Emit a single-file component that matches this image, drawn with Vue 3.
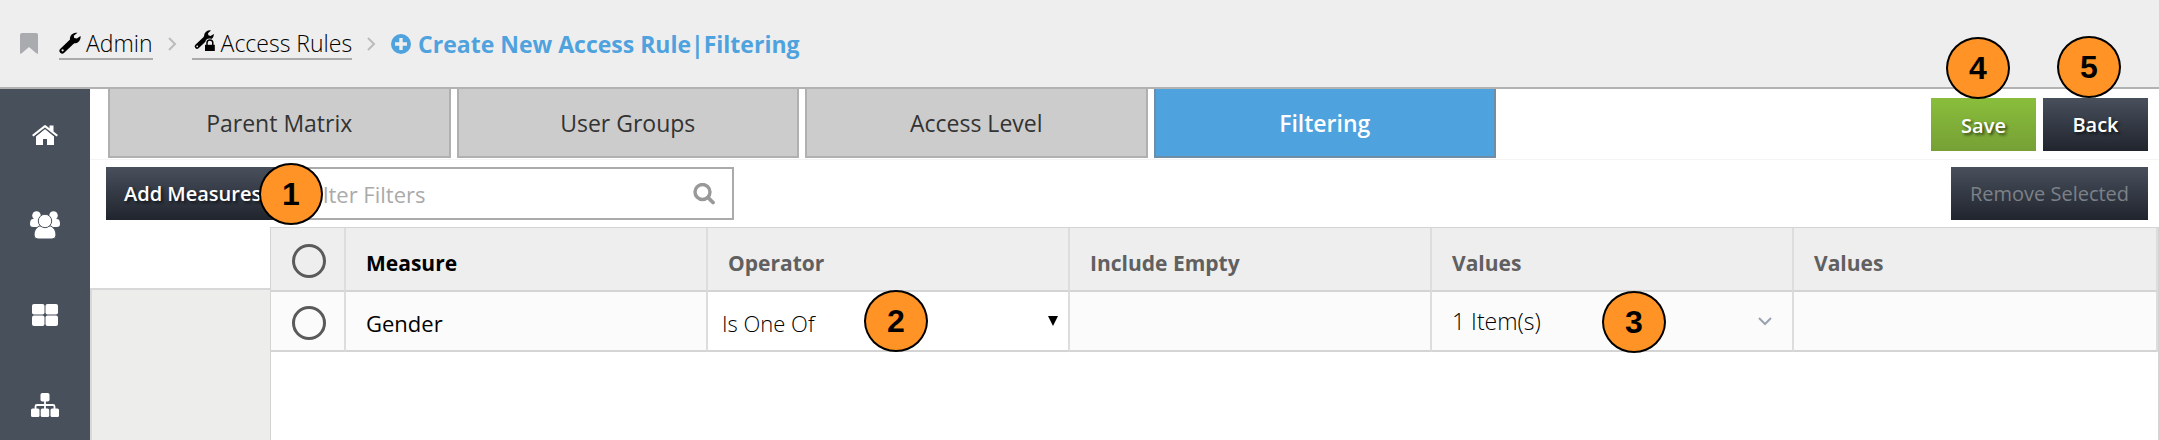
<script setup>
import { ref } from 'vue'

const tabs = ['Parent Matrix', 'User Groups', 'Access Level', 'Filtering']
const activeTab = ref('Filtering')
const headers = ['Measure', 'Operator', 'Include Empty', 'Values', 'Values']
const filterText = ref('')
const operator = ref('Is One Of')
</script>

<template>
  <div class="page">
    <header class="topbar">
      <button class="bookmark" type="button" aria-label="Bookmark">
        <svg width="18" height="21" viewBox="0 0 18 21"><path d="M2 0h14q2 0 2 2v19l-2-1-7-6-7 6-2 1V2q0-2 2-2z" fill="#a9abae" /></svg>
      </button>
      <nav class="crumbs" aria-label="Breadcrumb">
        <a class="crumb" href="#admin">
          <svg width="22" height="22" viewBox="0 0 22 22">
            <path d="M3.300 18.700 13.500 9" stroke="#000" stroke-width="5.600" stroke-linecap="round" />
            <path d="M18.500.8a6.200 6.200 0 0 0-7.400 7.600l2.700 2.700A6.200 6.200 0 0 0 21.500 4l-3.700 2.600-2.600-.6-.4-2.300z" />
            <circle cx="3.600" cy="18.300" r="1.100" fill="#eee" />
          </svg>
          <span>Admin</span>
        </a>
        <svg class="sep" width="9" height="14" viewBox="0 0 9 14"><path d="M1 1l6 6-6 6" /></svg>
        <a class="crumb" href="#rules">
          <svg class="lockicon" width="24" height="22" viewBox="0 0 24 22">
            <path d="M5 16.500 14 8" stroke="#000" stroke-width="4.600" stroke-linecap="round" />
            <path d="M19 .6a5.400 5.400 0 0 0-6.700 6.600l2.500 2.500A5.400 5.400 0 0 0 21.800 4l-3.300 1.900-2.100-.6-.4-2z" />
            <circle cx="5.200" cy="16.300" r=".9" fill="#eee" />
            <path d="M12 22v-8.500h1.500V12q0-3.500 4-3.500t4 3.500v1.500H24V22z" fill="#eee" />
            <path d="M13 14.800h9.800V21H13z" />
            <path d="M15 15v-2.200q0-2.800 2.900-2.800t2.900 2.800V15" fill="none" stroke="#000" stroke-width="1.500" />
          </svg>
          <span>Access Rules</span>
        </a>
        <svg class="sep" width="9" height="14" viewBox="0 0 9 14"><path d="M1 1l6 6-6 6" /></svg>
        <span class="current" aria-current="page">
          <svg width="20" height="20" viewBox="0 0 20 20"><circle cx="10" cy="10" r="10" fill="#4ea2de" /><path d="M10 4v12M4 10h12" stroke="#eee" stroke-width="3.400" /></svg>
          <span>Create New Access Rule|Filtering</span>
        </span>
      </nav>
    </header>

    <div class="body">
      <nav class="sidebar" aria-label="Main">
        <a href="#home" aria-label="Home">
          <svg width="26" height="20" viewBox="0 0 26 20"><path d="M4 11.500 13 4l9 7.500V20h-7v-6h-4v6H4z" /><path d="M0 10 12 .4q1-.8 2 0L17.500 3.200V.5h4v6L26 10l-1.500 1.600L13 2.600 1.500 11.600z" /><path d="M2.500 11.800 13 3.400l10.500 8.400" fill="none" stroke="#48505c" stroke-width=".8" /></svg>
        </a>
        <a href="#users" aria-label="Users">
          <svg width="30" height="28" viewBox="0 0 30 28">
            <circle cx="6.500" cy="4.500" r="4.300" /><circle cx="23.500" cy="4.500" r="4.300" />
            <path d="M3 8h7v8H3q-3 0-3-3 0-5 3-5zM27 8h-7v8h7q3 0 3-3 0-5-3-5z" />
            <path d="M9 15h12q5 3 5 9 0 4-4 4H8q-4 0-4-4 0-6 5-9z" stroke="#48505c" stroke-width="1" />
            <circle cx="15" cy="10" r="6.700" stroke="#48505c" stroke-width="1" />
          </svg>
        </a>
        <a href="#dashboards" aria-label="Dashboards">
          <svg width="26" height="22" viewBox="0 0 26 22"><rect width="12.500" height="10.500" rx="2" /><rect x="13.500" width="12.500" height="10.500" rx="2" /><rect y="11.500" width="12.500" height="10.500" rx="2" /><rect x="13.500" y="11.500" width="12.500" height="10.500" rx="2" /></svg>
        </a>
        <a href="#hierarchy" aria-label="Hierarchy">
          <svg width="28" height="24" viewBox="0 0 28 24"><path d="M14 7v9M4.500 16v-2.500q0-1.500 1.500-1.500h16q1.500 0 1.500 1.500V16" fill="none" stroke="#fff" stroke-width="1.800" /><rect x="9.500" width="9" height="8.500" rx="1.800" /><rect y="15.500" width="8.500" height="8.500" rx="1.500" /><rect x="9.700" y="15.500" width="8.500" height="8.500" rx="1.500" /><rect x="19.500" y="15.500" width="8.500" height="8.500" rx="1.500" /></svg>
        </a>
      </nav>

      <main class="main">
        <div class="tabrow">
          <div class="tabs" role="tablist">
            <button
              v-for="t in tabs"
              :key="t"
              class="tab"
              :class="{ active: t === activeTab }"
              type="button"
              role="tab"
              :aria-selected="t === activeTab"
              @click="activeTab = t"
            >{{ t }}</button>
          </div>
          <div class="actions">
            <div class="anchor">
              <button class="btn save" type="button">Save</button>
              <span class="badge on-save">4</span>
            </div>
            <div class="anchor">
              <button class="btn back" type="button">Back</button>
              <span class="badge on-back">5</span>
            </div>
          </div>
        </div>

        <div class="toolbar">
          <div class="anchor">
            <button class="btn add" type="button">Add Measures</button>
            <span class="badge on-add">1</span>
          </div>
          <label class="search">
            <input v-model="filterText" type="text" placeholder="Filter Filters" aria-label="Filter Filters" />
            <svg width="22" height="22" viewBox="0 0 22 22"><circle cx="9.500" cy="9" r="7.500" fill="none" stroke="#999" stroke-width="3.400" /><path d="M15 14.500 20 19.500" stroke="#999" stroke-width="3.800" stroke-linecap="round" /></svg>
          </label>
          <button class="btn remove" type="button" disabled>Remove Selected</button>
        </div>

        <div class="content">
          <div class="gutter"></div>
          <div class="grid">
            <table>
              <colgroup>
                <col class="pick" />
                <col v-for="(h, i) in headers" :key="i" class="data" />
              </colgroup>
              <thead>
                <tr>
                  <th class="pick"><input type="checkbox" aria-label="Select all" /></th>
                  <th v-for="(h, i) in headers" :key="i" :class="{ sorted: i === 0 }">{{ h }}</th>
                </tr>
              </thead>
              <tbody>
                <tr>
                  <td class="pick"><input type="checkbox" aria-label="Select Gender" /></td>
                  <td class="name">Gender</td>
                  <td class="edit">
                    <div class="field">
                      <select v-model="operator" aria-label="Operator">
                        <option>Is One Of</option>
                        <option>Is Not One Of</option>
                      </select>
                      <svg class="arrow" width="10" height="10" viewBox="0 0 10 10"><path d="M0 0h10L5 10z" /></svg>
                      <span class="badge on-operator">2</span>
                    </div>
                  </td>
                  <td></td>
                  <td class="values">
                    <div class="field">
                      <button class="items" type="button">
                        <span>1 Item(s)</span>
                        <svg width="14" height="9" viewBox="0 0 14 9"><path d="M1 1l6 6 6-6" fill="none" stroke="#99a3b0" stroke-width="2" /></svg>
                      </button>
                      <span class="badge on-values">3</span>
                    </div>
                  </td>
                  <td></td>
                </tr>
              </tbody>
            </table>
          </div>
        </div>
      </main>
    </div>
  </div>
</template>

<style>
body {
  margin: 0;
  background: #fff;
}
</style>

<style scoped>
.page {
  display: flex;
  flex-direction: column;
  min-height: 100vh;
  font-family: "Open Sans", "Noto Sans", sans-serif;
  color: #000;
}
.page * {
  box-sizing: border-box;
}
button,
input,
select {
  font-family: inherit;
  margin: 0;
}
button {
  border: 0;
  padding: 0;
  background: none;
  cursor: pointer;
}
svg {
  display: block;
  flex: none;
}
.topbar {
  display: flex;
  align-items: center;
  height: 89px;
  padding: 0 20px;
  background: #eee;
  border-bottom: 2px solid #b2b2b2;
}
.crumbs {
  display: flex;
  align-items: center;
  margin-left: 21px;
  font-size: 23px;
  line-height: 30px;
  white-space: nowrap;
}
.crumb {
  display: flex;
  align-items: center;
  gap: 5px;
  color: #000;
  font-weight: 300;
  text-decoration: none;
  border-bottom: 2px solid #aaa;
}
.lockicon {
  margin-bottom: 4px;
}
.sep {
  margin: 0 15px;
  fill: none;
  stroke: #bbb;
  stroke-width: 2;
}
.current {
  display: flex;
  align-items: center;
  gap: 7px;
  color: #4ea2de;
  font-weight: 700;
}
.body {
  display: flex;
  flex: 1;
}
.sidebar {
  flex: none;
  display: flex;
  flex-direction: column;
  width: 90px;
  padding-top: 1px;
  background: #48505c;
}
.sidebar a {
  display: flex;
  align-items: center;
  justify-content: center;
  height: 90px;
  fill: #fff;
}
.main {
  display: flex;
  flex-direction: column;
  flex: 1;
  min-width: 0;
}
.tabrow {
  display: flex;
  justify-content: space-between;
  height: 71px;
  padding: 0 11px 0 18px;
  border-bottom: 1px solid #f4f4f4;
}
.tabs {
  display: flex;
  gap: 6px;
  flex: 0 1 1388px;
  height: 69px;
}
.tab {
  flex: 1;
  background: #ccc;
  border: 2px solid #b0b0b0;
  border-top: 0;
  color: #333;
  font-size: 23px;
  line-height: 30px;
  font-weight: 500;
}
.tab.active {
  background: #4ea2de;
  border-color: #6f8ea6;
  color: #fff;
  font-weight: 600;
}
.actions {
  display: flex;
  gap: 7px;
  padding-top: 9px;
}
.anchor {
  position: relative;
}
.btn {
  height: 53px;
  color: #fff;
  font-size: 20px;
  line-height: 28px;
  font-weight: 600;
  white-space: nowrap;
  background: linear-gradient(#48505c, #20242d);
  text-shadow: 2px 2px 3px rgba(0, 0, 0, 0.6);
}
.save,
.back {
  width: 105px;
}
.save {
  padding-top: 3px;
  background: linear-gradient(#89be3b, #76a035);
}
.add {
  width: 170px;
  padding-left: 18px;
  text-align: left;
}
.remove {
  width: 197px;
  margin-left: auto;
  color: #7c8188;
  font-weight: 500;
  text-shadow: none;
}
.toolbar {
  display: flex;
  padding: 7px 11px 7px 16px;
}
.search {
  display: flex;
  align-items: center;
  width: 458px;
  height: 53px;
  padding: 0 17px 0 28px;
  border: 2px solid #aaa;
  background: #fff;
}
.search input {
  flex: 1;
  min-width: 0;
  border: 0;
  outline: 0;
  padding: 0;
  font-size: 22px;
  line-height: 30px;
  background: none;
}
.search input::placeholder {
  color: #aaa;
  opacity: 1;
}
.content {
  display: flex;
  flex: 1;
}
.gutter {
  flex: none;
  width: 180px;
  margin-top: 61px;
  background: #ededeb;
  border-top: 2px solid #d8d8d8;
  border-left: 2px solid #d8d8d8;
}
.grid {
  flex: 1;
  min-width: 0;
  border: 1px solid #d4d4d4;
  border-bottom: 0;
}
table {
  width: 100%;
  table-layout: fixed;
  border-collapse: separate;
  border-spacing: 0;
}
col.pick {
  width: 75px;
}
col.data {
  width: 362px;
}
col.data:last-child {
  width: auto;
}
th,
td {
  padding: 0 20px;
  text-align: left;
  border-right: 2px solid #ddd;
  border-bottom: 2px solid #d4d4d4;
}
th {
  height: 64px;
  padding-top: 8px;
  background: #eee;
  color: #606060;
  font-size: 21px;
  line-height: 28px;
  font-weight: 700;
}
th.sorted {
  color: #000;
}
td {
  height: 60px;
  padding-top: 3px;
  background: #fbfbfb;
  font-size: 22px;
  line-height: 30px;
}
td.name {
  font-weight: 500;
}
th.pick,
td.pick {
  padding: 3px 0 0 2px;
}
.pick input {
  display: block;
  appearance: none;
  width: 34px;
  height: 34px;
  margin: 0 auto;
  border: 3px solid #5a5a5a;
  border-radius: 50%;
}
td.edit,
td.values {
  padding: 0;
}
td.edit {
  background: #fff;
}
.field {
  position: relative;
  display: flex;
  align-items: center;
  height: 58px;
}
select {
  appearance: none;
  width: 100%;
  height: 58px;
  padding: 3px 14px 0;
  border: 0;
  background: transparent;
  color: #000;
  font-size: 22px;
  font-weight: 300;
}
.arrow {
  position: absolute;
  right: 10px;
  pointer-events: none;
}
.items {
  display: flex;
  align-items: center;
  justify-content: space-between;
  width: 100%;
  height: 54px;
  padding: 0 20px;
  color: #000;
  font-size: 23px;
  font-weight: 300;
}
.badge {
  position: absolute;
  z-index: 2;
  display: flex;
  align-items: center;
  justify-content: center;
  width: 64px;
  height: 62px;
  border: 2px solid #000;
  border-radius: 50%;
  background: #ff9326;
  color: #000;
  font: 700 32px/36px "Liberation Sans", Arial, sans-serif;
  pointer-events: none;
}
.on-save {
  left: 15px;
  top: -61px;
}
.on-back {
  left: 14px;
  top: -62px;
}
.on-add {
  left: 153px;
  top: -4px;
}
.on-operator {
  left: 156px;
  top: -2px;
}
.on-values {
  left: 170px;
  top: -1px;
}
</style>
